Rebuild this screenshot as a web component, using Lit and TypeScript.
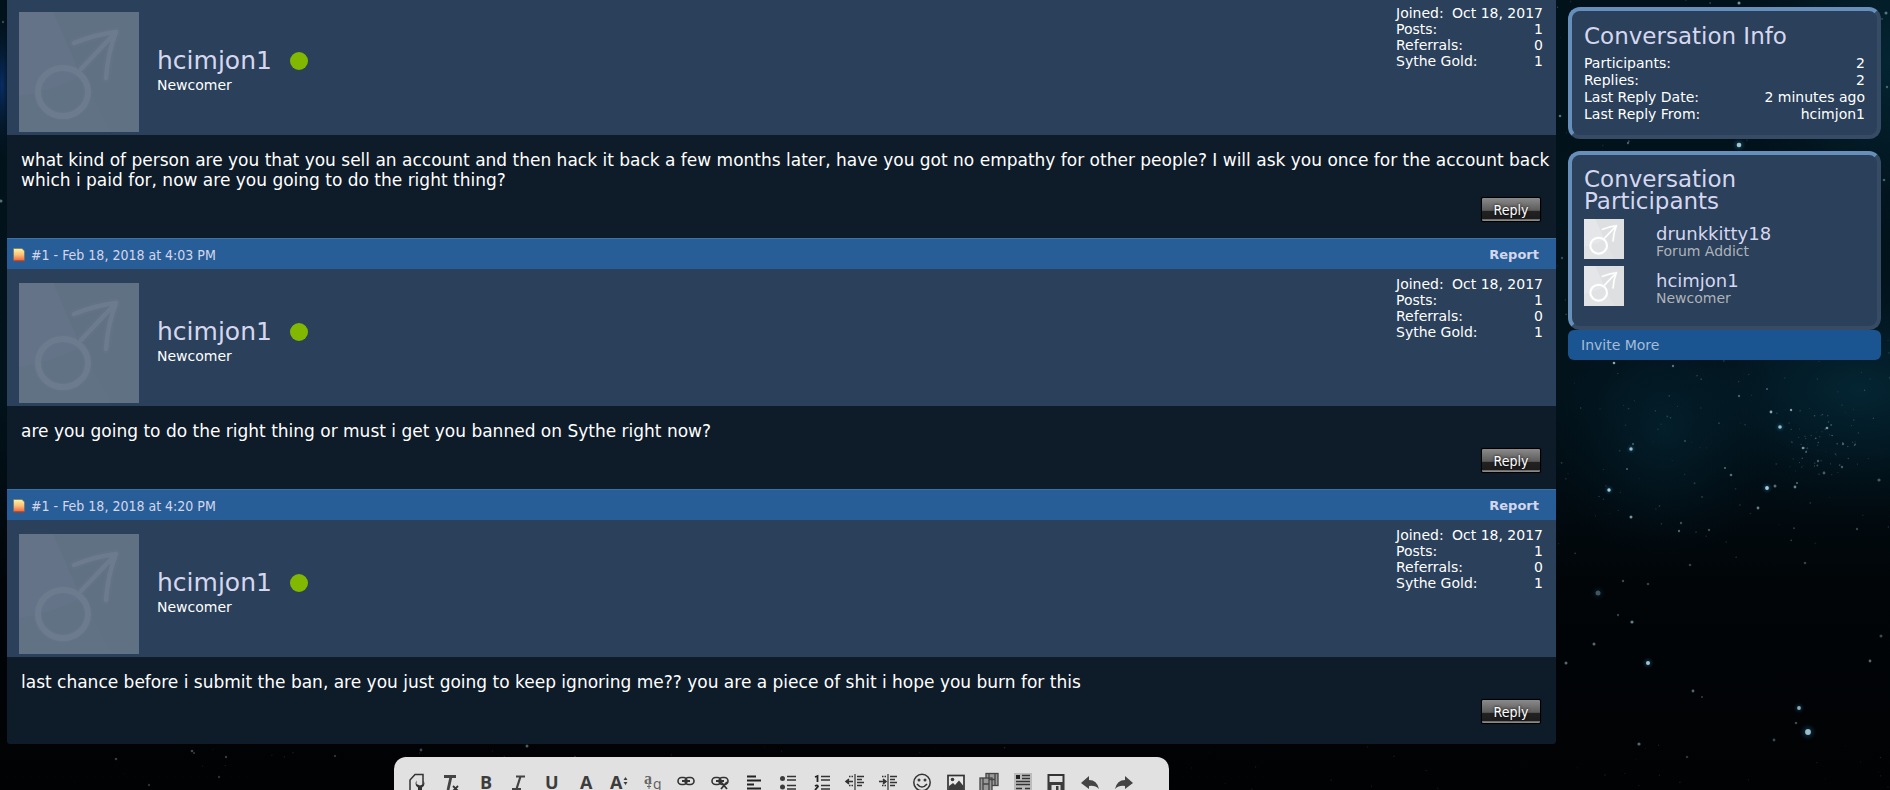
import { LitElement, html, svg, css } from "lit";
import { customElement, property } from "lit/decorators.js";

type Star = [number, number, number, number];

// x, y, radius, opacity of the brighter stars
const BRIGHT: Star[] = [
  [1614, 363, 1.3, 0.8], [1673, 366, 1.2, 0.5], [1739, 396, 1.2, 0.4], [1767, 389, 1, 0.4],
  [1771, 412, 1.4, 0.8], [1791, 410, 1.2, 0.7], [1780, 427, 1.8, 0.9], [1827, 428, 1.3, 0.7],
  [1631, 449, 1.7, 0.9], [1633, 444, 1.1, 0.4], [1627, 469, 1.1, 0.4], [1609, 490, 1.7, 1],
  [1685, 441, 1, 0.3], [1725, 468, 1, 0.5], [1731, 475, 1.3, 0.5], [1803, 448, 1.3, 0.7],
  [1806, 452, 1, 0.4], [1843, 444, 1.2, 0.4], [1818, 461, 1.2, 0.4], [1824, 473, 1.4, 0.4],
  [1842, 467, 1.2, 0.4], [1767, 488, 1.9, 1], [1775, 486, 1.5, 0.5], [1795, 487, 1.4, 0.6],
  [1797, 483, 1, 0.5], [1758, 508, 1.4, 0.6], [1631, 517, 1.5, 0.7], [1681, 523, 1.2, 0.35],
  [1679, 531, 1.2, 0.45], [1709, 530, 1.2, 0.35], [1690, 565, 1.3, 0.3], [1805, 563, 1.3, 0.3],
  [1598, 593, 2.5, 0.35], [1648, 584, 1.3, 0.3], [1623, 581, 1.2, 0.35], [1632, 622, 1.6, 0.6],
  [1618, 615, 1.2, 0.3], [1594, 644, 1.5, 0.5], [1566, 663, 1.5, 0.5], [1648, 663, 2, 0.95],
  [1693, 691, 1.4, 0.5], [1702, 697, 1, 0.3], [1799, 708, 1.9, 0.8], [1808, 732, 2.9, 0.9],
  [1796, 723, 1.3, 0.35], [1774, 740, 1.4, 0.35], [1639, 744, 1.6, 0.5], [1687, 757, 1.3, 0.25],
  [1881, 636, 1.5, 0.35], [1870, 661, 1.4, 0.5], [1857, 529, 1.2, 0.3], [1879, 480, 1.6, 0.4],
  [1739, 3, 1.5, 0.7], [1560, 116, 1.3, 0.5], [1739, 145, 2.3, 0.95], [1628, 143, 1.2, 0.4],
  [1886, 13, 1.5, 0.5], [1884, 180, 1.3, 0.4], [1887, 87, 1.2, 0.4], [1562, 258, 1.2, 0.3],
  [421, 750, 1.4, 0.35], [527, 746, 1.5, 0.45], [192, 751, 1.3, 0.35], [116, 759, 1.3, 0.3],
  [194, 753, 1, 0.3], [335, 756, 1.2, 0.25], [226, 757, 1.2, 0.3], [219, 777, 1.2, 0.25],
  [149, 785, 1.2, 0.25], [575, 757, 1.2, 0.2], [1, 201, 1.5, 0.5], [3, 22, 1.2, 0.3],
];

function dust(): Star[] {
  let seed = 7321;
  const next = () => (seed = (seed * 16807) % 2147483647) / 2147483647;
  const stars: Star[] = [];
  for (let i = 0; i < 260; i++) {
    stars.push([1556 + next() * 334, next() * 560, 0.5 + next() * 0.5, 0.08 + next() * 0.22]);
  }
  for (let i = 0; i < 60; i++) {
    stars.push([1790 + next() * 70, 405 + next() * 70, 0.5 + next() * 0.5, 0.12 + next() * 0.25]);
  }
  for (let i = 0; i < 70; i++) {
    stars.push([next() * 1890, 745 + next() * 45, 0.5 + next() * 0.4, 0.05 + next() * 0.12]);
  }
  return stars;
}
const DUST = dust();

@customElement("star-field")
class StarField extends LitElement {
  static styles = css`
    :host { display: block; position: absolute; inset: 0; z-index: -1; overflow: hidden; background: #010204; }
    svg { display: block; width: 100%; height: 100%; }
  `;
  render() {
    return html`<svg viewBox="0 0 1890 790" preserveAspectRatio="xMaxYMin slice" aria-hidden="true">
      <defs>
        <radialGradient id="teal"><stop offset="0" stop-color="#052b3a" stop-opacity=".75" /><stop offset=".5" stop-color="#03202d" stop-opacity=".5" /><stop offset="1" stop-color="#02101a" stop-opacity="0" /></radialGradient>
        <radialGradient id="blue"><stop offset="0" stop-color="#0a357a" stop-opacity=".8" /><stop offset="1" stop-color="#021520" stop-opacity="0" /></radialGradient>
        <radialGradient id="glow"><stop offset="0" stop-color="#3a90b8" stop-opacity=".45" /><stop offset="1" stop-color="#0a4a70" stop-opacity="0" /></radialGradient>
        <linearGradient id="base" x1="0" y1="0" x2="0" y2="1"><stop offset="0" stop-color="#02121b" /><stop offset=".5" stop-color="#02131c" /><stop offset=".74" stop-color="#010508" /><stop offset="1" stop-color="#010204" /></linearGradient>
      </defs>
      <rect width="1890" height="790" fill="url(#base)" />
      <ellipse cx="1890" cy="60" rx="170" ry="200" fill="url(#teal)" />
      <ellipse cx="1860" cy="390" rx="210" ry="130" fill="url(#teal)" />
      <ellipse cx="1665" cy="430" rx="120" ry="130" fill="url(#teal)" opacity=".7" />
      <ellipse cx="2" cy="85" rx="14" ry="75" fill="url(#blue)" />
      ${DUST.map(([x, y, r, o]) => svg`<circle cx=${x} cy=${y} r=${r} opacity=${o} fill="#9cc6d4" />`)}
      ${BRIGHT.map(([x, y, r, o]) => svg`${r > 1.6 ? svg`<circle cx=${x} cy=${y} r=${r * 3} opacity=${o} fill="url(#glow)" />` : ""}<circle cx=${x} cy=${y} r=${r} opacity=${o} fill="#a9cdd8" />`)}
    </svg>`;
  }
}

@customElement("user-avatar")
class UserAvatar extends LitElement {
  static styles = css`
    :host { display: block; flex: none; }
    svg { display: block; width: 100%; height: 100%; }
  `;
  render() {
    return html`<svg viewBox="0 0 120 120" role="img" aria-label="Avatar">
      <rect width="120" height="120" fill="#dddfe0" />
      <path d="M0 0H34L62 64Q30 80 0 84Z" fill="#e5e6e9" />
      <path d="M0 84Q30 80 62 64L92 120H0Z" fill="#e0e2e4" />
      <g fill="none" stroke="#fff" stroke-linecap="round" stroke-linejoin="round">
        <g stroke-width="9" opacity=".15"><ellipse cx="44" cy="80" rx="25" ry="24" /><path d="M62 57Q78 40 97 20M55 31Q78 22 97 20Q89 40 87 66" /></g>
        <ellipse cx="44" cy="80" rx="25" ry="24" stroke-width="6" />
        <path d="M62 57Q78 40 97 20M55 31Q78 22 97 20Q89 40 87 66" stroke-width="4.500" />
      </g>
    </svg>`;
  }
}

@customElement("private-message")
class PrivateMessage extends LitElement {
  @property() date = "";
  @property() text = "";

  static styles = css`
    :host { display: block; color: #fff; }
    a { color: inherit; text-decoration: none; }
    .bar { display: flex; align-items: center; gap: 6px; height: 28px; padding: 2px 17px 0 6px; border-top: 1px solid #3a71a9; background: #285e98; color: #d4d6ec; font: 14px/28px "DejaVu Sans Condensed", "DejaVu Sans", sans-serif; }
    .bar svg { width: 12px; height: 14px; }
    .report { margin-left: auto; font: bold 13px/28px "DejaVu Sans", sans-serif; }
    .user { display: flex; align-items: flex-start; gap: 18px; padding: 0 13px 3px 12px; background: #2a405b; }
    .avatar { width: 120px; height: 120px; margin-top: 14px; opacity: 0.31; }
    .who { flex: 1; align-self: center; padding-top: 10px; }
    .line { display: flex; align-items: center; gap: 18px; }
    .name { margin: 0; color: #d6d7ee; font-size: 25px; font-weight: 400; line-height: 30px; }
    .online { width: 18px; height: 18px; border-radius: 50%; background: #82b800; }
    .title { margin: 0; font-size: 14px; line-height: 18px; }
    .stats { width: 147px; margin: 7px 0 0; font-size: 14px; line-height: 16px; }
    .stats div { display: flex; justify-content: space-between; }
    dd { margin: 0; }
    .body { display: flex; flex-direction: column; gap: 7px; padding: 15px 6px 16px 14px; background: #0e1b29; }
    :host([last]) .body { padding-bottom: 20px; border-radius: 0 0 3px 3px; }
    .text { margin: 0; font-size: 17px; line-height: 20px; }
    .reply { align-self: flex-end; width: 60px; height: 25px; margin: 0 9px 0 0; padding: 0; border: 1px solid #000; border-radius: 2px; background: linear-gradient(#8a8a8a 0, #5c5c5c 54%, #222 56%, #1c1c1c 92%, #8a8a8a 94%); color: #fff; font: 14px/25px "DejaVu Sans Condensed", "DejaVu Sans", sans-serif; text-shadow: 0 0 3px #000; box-shadow: 0 0 1px #000; }
  `;

  render() {
    return html`
      ${this.date
        ? html`<div class="bar">
            <svg viewBox="0 0 12 14" aria-hidden="true">
              <defs><linearGradient id="page" x1="0" y1="0" x2="0" y2="1"><stop offset="0" stop-color="#fdf6a0" /><stop offset=".5" stop-color="#fbc07a" /><stop offset="1" stop-color="#f0603c" /></linearGradient></defs>
              <path d="M.5 .5H9L11.500 3V13H.5Z" fill="url(#page)" stroke="#6d6b60" stroke-width=".6" />
              <path d="M.5 13H11.500" stroke="#963a30" />
            </svg>
            <a href="#message">#1 - ${this.date}</a><a class="report" href="#report">Report</a>
          </div>`
        : ""}
      <div class="user">
        <user-avatar class="avatar"></user-avatar>
        <div class="who">
          <div class="line"><h3 class="name"><a href="#member">hcimjon1</a></h3><span class="online"></span></div>
          <p class="title">Newcomer</p>
        </div>
        <dl class="stats">
          <div><dt>Joined:</dt><dd>Oct 18, 2017</dd></div>
          <div><dt>Posts:</dt><dd>1</dd></div>
          <div><dt>Referrals:</dt><dd>0</dd></div>
          <div><dt>Sythe Gold:</dt><dd>1</dd></div>
        </dl>
      </div>
      <div class="body"><p class="text">${this.text}</p><button class="reply">Reply</button></div>`;
  }
}

const link = svg`<g fill="none" stroke="#333" stroke-width="1.600"><rect x="4" y="6.500" width="9" height="7" rx="3.500" /><rect x="11" y="6.500" width="9" height="7" rx="3.500" /><path d="M8 10H16" stroke-width="2" /></g>`;
const indent = (flip: boolean) => svg`<g stroke="#333" stroke-width="1.600" fill="none"><path d="M12 3V20" stroke-width="1.200" /><path d="M14 5.500H21M14 8.500H19M14 11.500H21M14 14.500H19" /><path d="M6 5.500H10M6 14.500H10" stroke-dasharray="1.500 1" /><path d="M3 10.500H10" /><path d=${flip ? "M7 8L10 10.500L7 13" : "M6 8L3 10.500L6 13"} fill="#333" /></g>`;

const TOOLS: [string, unknown][] = [
  ["Use BB code editor", svg`<path d="M5 20V9L10 3.500H18V14" fill="none" stroke="#333" stroke-width="1.500" /><path d="M11.500 9.500Q9 14 13 16.500V20H17V16.500Q21 14 18.500 9.500V13L15 14.500L11.500 13Z" fill="#333" />`],
  ["Remove formatting", svg`<path d="M5 5.500H17M12 5.500L9 19" fill="none" stroke="#444" stroke-width="2.800" /><path d="M14 15L19 20M19 15L14 20" stroke="#333" stroke-width="1.800" />`],
  ["Bold", svg`<text x="7" y="18" font-size="18" font-weight="700">B</text>`],
  ["Italic", svg`<path d="M10 5.500H19M6 18H15M14.500 5.500L10.500 18" stroke="#444" stroke-width="2.200" />`],
  ["Underline", svg`<text x="5" y="18" font-size="18" font-weight="700">U</text>`],
  ["Text color", svg`<text x="7" y="18" font-size="18" font-weight="700">A</text>`],
  ["Font size", svg`<text x="3" y="18" font-size="18" font-weight="700">A</text><path d="M18.500 6L20.500 9H16.500ZM18.500 14L20.500 11H16.500Z" />`],
  ["Font family", svg`<text x="3" y="13" font-size="16" font-family="Liberation Serif" font-weight="700" opacity=".75">a</text><text x="12" y="18" font-size="14" opacity=".8">q</text><path d="M8 13V18M6 15.500H10" stroke="#666" />`],
  ["Link", link],
  ["Unlink", svg`${link}<path d="M13 11L19 18M19 11L13 18" stroke="#333" stroke-width="1.800" />`],
  ["Alignment", svg`<path d="M5 5.500H14M5 9.500H19M5 13.500H12M5 17.500H19" stroke="#222" stroke-width="2.200" />`],
  ["Bullet list", svg`<circle cx="7.500" cy="7.500" r="2.500" /><circle cx="7.500" cy="16" r="2.500" /><path d="M12 5.500H21M12 9H21M12 14.500H21M12 18H21" stroke="#333" stroke-width="1.600" />`],
  ["Numbered list", svg`<path d="M6 6L8.500 5V11M6 15Q8.500 13.500 9 15.500L6 19" fill="none" stroke="#222" stroke-width="1.800" /><path d="M12 5.500H21M12 9H21M12 14.500H21M12 18H21" stroke="#333" stroke-width="1.600" />`],
  ["Outdent", indent(false)],
  ["Indent", indent(true)],
  ["Smilies", svg`<circle cx="12" cy="11.500" r="8.200" fill="none" stroke="#333" stroke-width="1.500" /><circle cx="9" cy="9" r="1.500" /><circle cx="15" cy="9" r="1.500" /><path d="M7 13Q12 19 17 13" fill="none" stroke="#333" stroke-width="1.500" />`],
  ["Image", svg`<rect x="4" y="4.500" width="16" height="15" fill="#e8e8e8" stroke="#333" stroke-width="1.700" /><circle cx="8.500" cy="8.500" r="1.800" /><path d="M5 19V15L9 12L11 14L15 9.500L19.500 15V19Z" />`],
  ["Media", svg`<g stroke="#444" stroke-width="1.300" fill="#999"><rect x="9" y="2.500" width="12" height="12" /><rect x="3" y="7" width="12" height="13" /><path d="M12 3V14M18 3V14M6 7V20M12 7V20M12 8.500H18M6 13H12" /></g>`],
  ["Quote", svg`<rect x="3" y="2" width="18" height="18" fill="#bbb" /><path d="M5 4H9V8H5Z" fill="#222" /><path d="M11 4.500H19M11 7.500H19M5 10.500H19M5 13.500H19M5 17.500H11M14 17.500H19" stroke="#333" stroke-width="1.500" />`],
  ["Drafts", svg`<path d="M4.500 4H19.500V20H4.500Z" fill="none" stroke="#333" stroke-width="2" /><path d="M4 11H20V21H4Z" /><rect x="7.500" y="14" width="9" height="7" fill="#ddd" /><rect x="12" y="15" width="2.500" height="5" />`],
  ["Undo", svg`<path d="M3 12L11 5V9Q19 9 21 18Q17 14 11 15V18Z" fill="#444" />`],
  ["Redo", svg`<path d="M21 12L13 5V9Q5 9 3 18Q7 14 13 15V18Z" fill="#444" />`],
];

@customElement("reply-editor")
class ReplyEditor extends LitElement {
  static styles = css`
    :host { display: block; width: 50%; box-sizing: border-box; margin: 13px auto 0; padding: 14px 33px 0 11px; border-radius: 12px 12px 0 0; background: #e1e1e1; height: 240px; }
    .tools { display: flex; justify-content: space-between; }
    .tool { width: 24px; height: 24px; padding: 0; border: 0; background: none; }
    svg { display: block; width: 24px; height: 24px; fill: #3c3c3c; font-family: "Open Sans", sans-serif; }
  `;
  render() {
    return html`<div class="tools" role="toolbar" aria-label="Formatting">
      ${TOOLS.map(([name, icon]) => html`<button class="tool" aria-label=${name}><svg viewBox="0 0 24 24" aria-hidden="true">${icon}</svg></button>`)}
    </div>`;
  }
}

@customElement("app-root")
class AppRoot extends LitElement {
  static styles = css`
    :host { display: block; position: relative; z-index: 0; height: 100vh; overflow: hidden; font-family: "DejaVu Sans", sans-serif; color: #fff; }
    a { color: inherit; text-decoration: none; }
    .page { display: grid; grid-template-columns: minmax(0, 1fr) 313px; gap: 12px; align-items: start; padding: 0 9px 0 7px; }
    .messages { margin-top: -2px; }
    .side { padding-top: 7px; }
    .card { border: 4px solid #668fbb; border-right-color: #384b64; border-bottom-color: #384b64; border-radius: 12px; padding: 14px 12px 12px 12px; background: #2a405b; }
    .people { margin-top: 12px; padding-top: 13px; padding-bottom: 20px; }
    h2 { margin: 0 0 8px; color: #d6d7ee; font-size: 23px; font-weight: 400; line-height: 22px; }
    .people h2 { margin-bottom: 7px; }
    dl { margin: 0; font-size: 14px; line-height: 17px; }
    dl div { display: flex; justify-content: space-between; }
    dd { margin: 0; }
    ul { display: grid; gap: 7px; margin: 0; padding: 0; list-style: none; }
    li { display: flex; align-items: flex-end; gap: 32px; }
    .face { width: 40px; height: 40px; }
    .name { display: block; color: #d6d7ee; font-size: 18px; line-height: 18px; }
    .rank { display: block; color: #b0b3b8; font-size: 14px; line-height: 16px; }
    .invite { display: block; padding: 0 13px; border-radius: 6px; background: #1a5592; color: #a6bcd8; font-size: 14px; line-height: 30px; }
  `;
  render() {
    return html`
      <star-field></star-field>
      <div class="page">
        <main class="messages">
          <private-message text="what kind of person are you that you sell an account and then hack it back a few months later, have you got no empathy for other people? I will ask you once for the account back which i paid for, now are you going to do the right thing?"></private-message>
          <private-message date="Feb 18, 2018 at 4:03 PM" text="are you going to do the right thing or must i get you banned on Sythe right now?"></private-message>
          <private-message last date="Feb 18, 2018 at 4:20 PM" text="last chance before i submit the ban, are you just going to keep ignoring me?? you are a piece of shit i hope you burn for this"></private-message>
          <reply-editor></reply-editor>
        </main>
        <aside class="side">
          <section class="card">
            <h2>Conversation Info</h2>
            <dl>
              <div><dt>Participants:</dt><dd>2</dd></div>
              <div><dt>Replies:</dt><dd>2</dd></div>
              <div><dt>Last Reply Date:</dt><dd>2 minutes ago</dd></div>
              <div><dt>Last Reply From:</dt><dd><a href="#member">hcimjon1</a></dd></div>
            </dl>
          </section>
          <section class="card people">
            <h2>Conversation Participants</h2>
            <ul>
              <li><user-avatar class="face"></user-avatar><div><a class="name" href="#member">drunkkitty18</a><span class="rank">Forum Addict</span></div></li>
              <li><user-avatar class="face"></user-avatar><div><a class="name" href="#member">hcimjon1</a><span class="rank">Newcomer</span></div></li>
            </ul>
          </section>
          <a class="invite" href="#invite">Invite More</a>
        </aside>
      </div>`;
  }
}
